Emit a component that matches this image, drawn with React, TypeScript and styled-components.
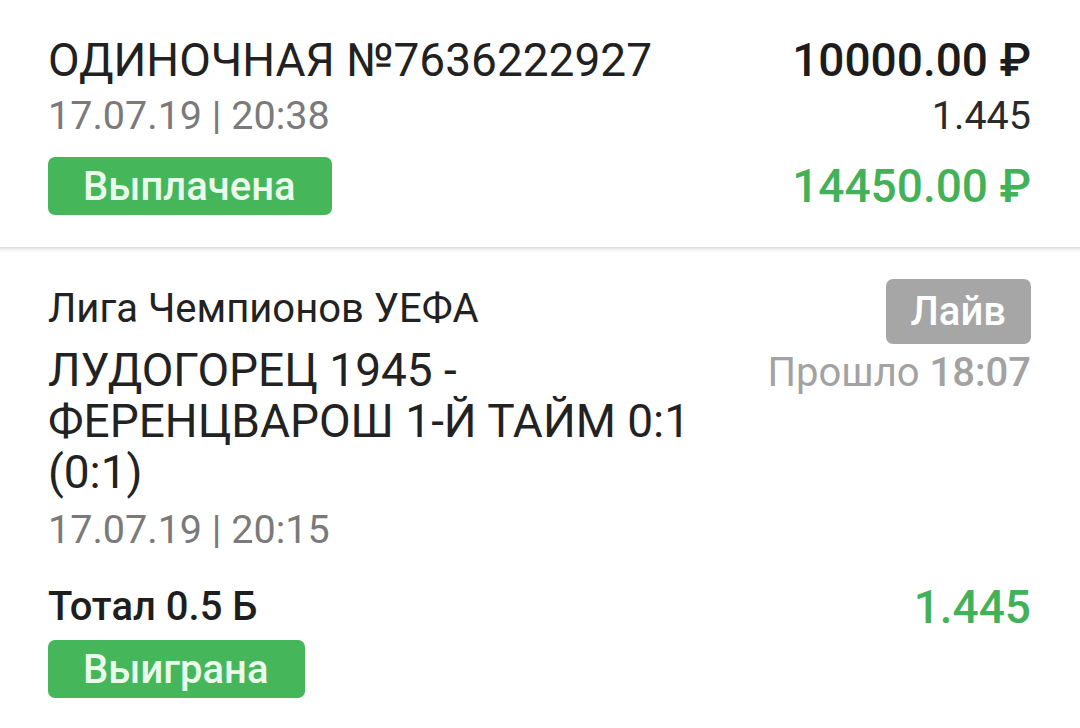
import styled, { createGlobalStyle } from "styled-components";

const GlobalStyle = createGlobalStyle`
  html, body {
    margin: 0;
    padding: 0;
    background: #ffffff;
    font-family: Roboto, "Noto Sans", "Liberation Sans", sans-serif;
    -webkit-font-smoothing: antialiased;
  }
`;

const GREEN = "#45b65a";
const GREEN_TEXT = "#43b158";

const Page = styled.div`
  width: 1080px;
  height: 728px;
  overflow: hidden;
  background: #fff;
`;

const Header = styled.div`
  display: grid;
  grid-template-columns: 1fr auto;
  grid-template-rows: 56px 56px auto;
  padding: 32px 49px 32px 48px;
`;

const Title = styled.div`
  font-size: 46px;
  line-height: 56px;
  color: #212121;
  white-space: nowrap;
`;

const Amount = styled.div<{ $green?: boolean; $offset?: number }>`
  font-size: 46px;
  line-height: ${(p) => (p.$offset ? "58px" : "56px")};
  margin-top: ${(p) => p.$offset || 0}px;
  font-weight: 500;
  text-align: right;
  color: ${(p) => (p.$green ? GREEN_TEXT : "#1c1c1c")};
  white-space: nowrap;
`;

const Muted = styled.div<{ $dark?: boolean }>`
  font-size: 39.5px;
  line-height: 56px;
  color: ${(p) => (p.$dark ? "#2a2a2a" : "#7a7a7a")};
  text-align: ${(p) => (p.$dark ? "right" : "left")};
  white-space: nowrap;
`;

const Badge = styled.div<{ $gray?: boolean; $height?: number; $offset?: number }>`
  justify-self: start;
  align-self: ${(p) => (p.$gray ? "flex-end" : "start")};
  display: inline-flex;
  align-items: center;
  height: ${(p) => p.$height || 58}px;
  margin-top: ${(p) => p.$offset || 0}px;
  padding: 0 ${(p) => (p.$gray ? 25 : 36)}px 0 ${(p) => (p.$gray ? 25 : 35)}px;
  border-radius: 7px;
  background: ${(p) => (p.$gray ? "#a6a6a6" : GREEN)};
  color: ${(p) => (p.$gray ? "#ffffff" : "#eafbec")};
  font-size: 40px;
  font-weight: 500;
  white-space: nowrap;
`;

const Divider = styled.div`
  height: 6px;
  background: linear-gradient(#dadada, #f4f4f4 50%, #ffffff);
`;

const Event = styled.div`
  padding: 26px 49px 0 48px;
`;

const EventTop = styled.div`
  display: flex;
  justify-content: space-between;
  align-items: flex-start;
`;

const EventInfo = styled.div`
  width: 700px;
  display: flex;
  flex-direction: column;
`;

const League = styled.div`
  font-size: 40px;
  line-height: 60px;
  color: #222;
`;

const Match = styled.div`
  margin-top: 6px;
  font-size: 46px;
  line-height: 51px;
  color: #222;
`;

const EventDate = styled(Muted)`
  margin-top: 8px;
  line-height: 48px;
`;

const LiveBox = styled.div`
  display: flex;
  flex-direction: column;
  align-items: flex-end;
`;

const Elapsed = styled.div`
  margin-top: 7px;
  font-size: 40px;
  line-height: 44px;
  color: #a2a2a2;
  white-space: nowrap;

  b {
    font-weight: 500;
  }
`;

const Outcome = styled.div`
  margin-top: 29px;
  display: grid;
  grid-template-columns: 1fr auto;
  grid-template-rows: 48px auto;
`;

const OutcomeName = styled.div`
  font-size: 40px;
  line-height: 48px;
  font-weight: 500;
  color: #1e1e1e;
`;

const Coef = styled.div`
  font-size: 46px;
  line-height: 48px;
  font-weight: 500;
  color: ${GREEN_TEXT};
  text-align: right;
`;

export default function App() {
  return (
    <Page>
      <GlobalStyle />
      <Header>
        <Title>ОДИНОЧНАЯ №7636222927</Title>
        <Amount>10000.00 ₽</Amount>
        <Muted>17.07.19 | 20:38</Muted>
        <Muted $dark>1.445</Muted>
        <Badge $offset={13}>Выплачена</Badge>
        <Amount $green $offset={13}>
          14450.00 ₽
        </Amount>
      </Header>
      <Divider />
      <Event>
        <EventTop>
          <EventInfo>
            <League>Лига Чемпионов УЕФА</League>
            <Match>ЛУДОГОРЕЦ 1945 - ФЕРЕНЦВАРОШ 1-Й ТАЙМ 0:1 (0:1)</Match>
            <EventDate>17.07.19 | 20:15</EventDate>
          </EventInfo>
          <LiveBox>
            <Badge $gray $height={65}>
              Лайв
            </Badge>
            <Elapsed>
              Прошло <b>18:07</b>
            </Elapsed>
          </LiveBox>
        </EventTop>
        <Outcome>
          <OutcomeName>Тотал 0.5 Б</OutcomeName>
          <Coef>1.445</Coef>
          <Badge $offset={9}>Выиграна</Badge>
        </Outcome>
      </Event>
    </Page>
  );
}
